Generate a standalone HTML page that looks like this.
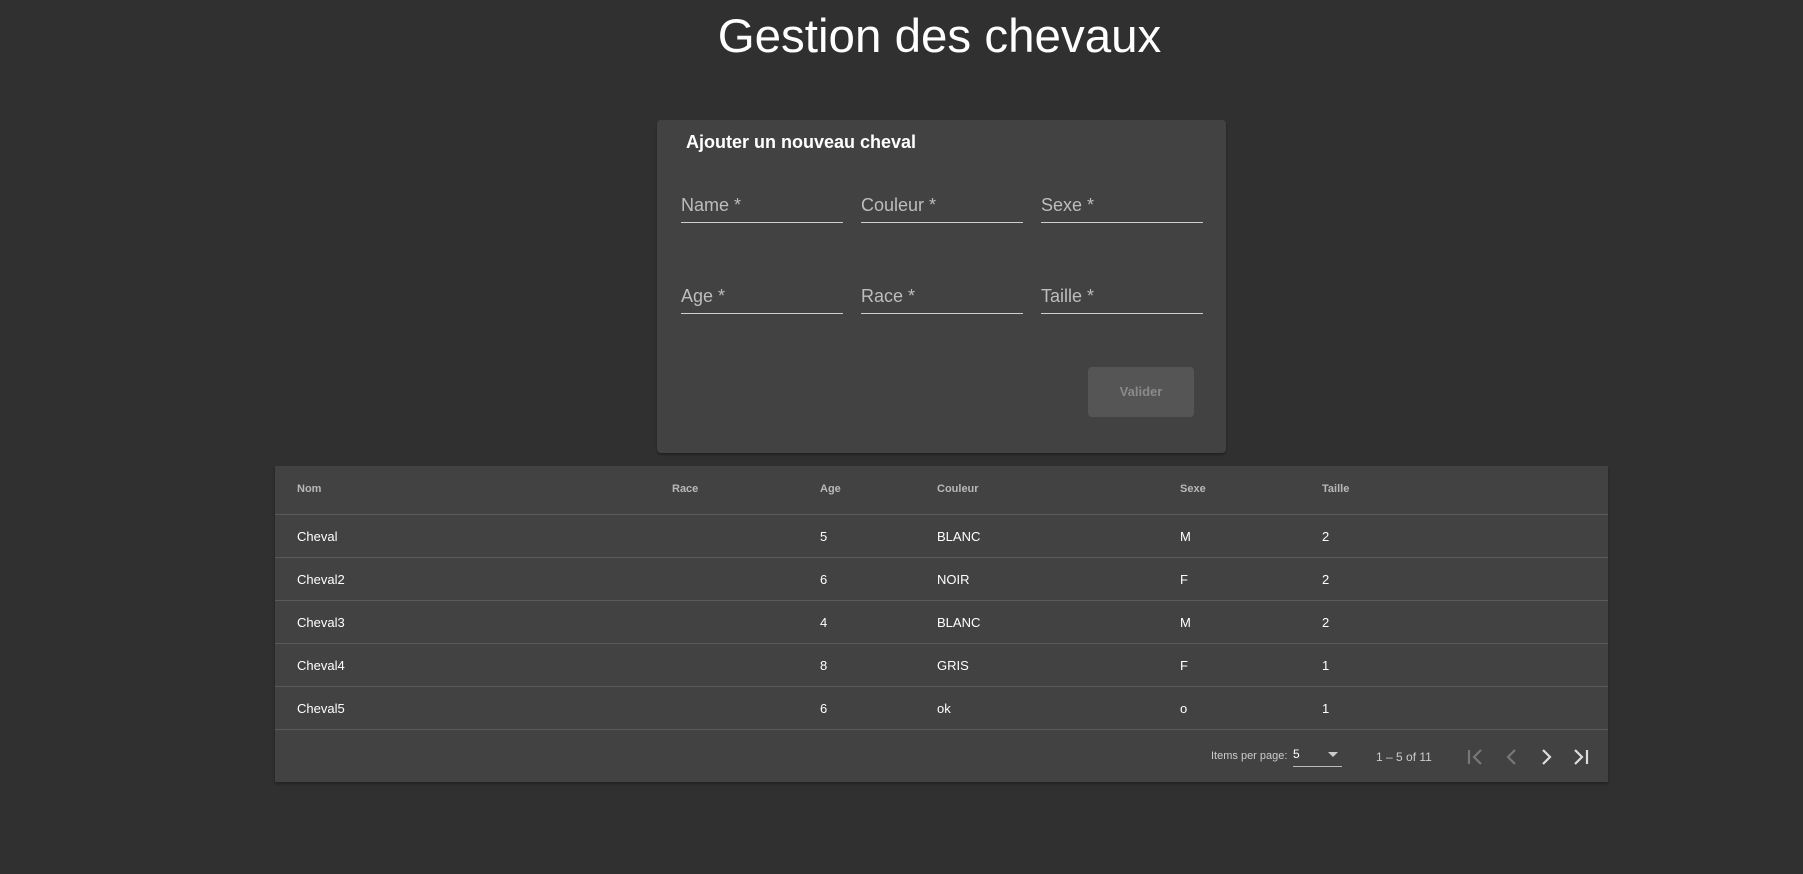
<!DOCTYPE html>
<html><head><meta charset="utf-8"><style>
*{margin:0;padding:0;box-sizing:border-box}
body{width:1803px;height:874px;background:#303030;font-family:"Liberation Sans",sans-serif;position:relative;overflow:hidden;color:#fff}
.a{position:absolute;white-space:nowrap}
h1{position:absolute;top:9px;text-align:center;font-weight:400;font-size:47.5px;color:#fff}
.card{position:absolute;left:657px;top:120px;width:569px;height:333px;background:#424242;border-radius:4px;box-shadow:0 2px 2px rgba(0,0,0,.3)}
.lbl{position:absolute;font-size:18px;color:#bdbdbd;border-bottom:1px solid #cfcfcf;width:162px;height:33px;padding-top:5px}
.btn{position:absolute;left:1088px;top:367px;width:106px;height:50px;background:#555;border-radius:4px;color:#8a8a8a;font-weight:bold;font-size:13px;text-align:center;line-height:50px}
.tbl{position:absolute;left:275px;top:466px;width:1333px;height:316px;background:#424242;box-shadow:0 2px 3px rgba(0,0,0,.3)}
.row{position:absolute;left:0;width:1333px;height:43px;border-bottom:1px solid #5a5a5a;font-size:13px;line-height:43px}
.row span{position:absolute}
.hd{font-size:11px;font-weight:bold;color:#b8b8b8}
</style></head><body>
<h1 style="width:1803px;left:38px">Gestion des chevaux</h1>
<div class="card"></div>
<div class="a" style="left:686px;top:132px;font-size:18px;font-weight:bold">Ajouter un nouveau cheval</div>
<div class="lbl" style="left:681px;top:190px">Name *</div>
<div class="lbl" style="left:861px;top:190px">Couleur *</div>
<div class="lbl" style="left:1041px;top:190px">Sexe *</div>
<div class="lbl" style="left:681px;top:281px">Age *</div>
<div class="lbl" style="left:861px;top:281px">Race *</div>
<div class="lbl" style="left:1041px;top:281px">Taille *</div>
<div class="btn">Valider</div>
<div class="tbl">
<div class="row hd" style="top:0;height:49px;line-height:46px"><span style="left:22px">Nom</span><span style="left:397px">Race</span><span style="left:545px">Age</span><span style="left:662px">Couleur</span><span style="left:905px">Sexe</span><span style="left:1047px">Taille</span></div>
<div class="row" style="top:49px"><span style="left:22px">Cheval</span><span style="left:545px">5</span><span style="left:662px">BLANC</span><span style="left:905px">M</span><span style="left:1047px">2</span></div>
<div class="row" style="top:92px"><span style="left:22px">Cheval2</span><span style="left:545px">6</span><span style="left:662px">NOIR</span><span style="left:905px">F</span><span style="left:1047px">2</span></div>
<div class="row" style="top:135px"><span style="left:22px">Cheval3</span><span style="left:545px">4</span><span style="left:662px">BLANC</span><span style="left:905px">M</span><span style="left:1047px">2</span></div>
<div class="row" style="top:178px"><span style="left:22px">Cheval4</span><span style="left:545px">8</span><span style="left:662px">GRIS</span><span style="left:905px">F</span><span style="left:1047px">1</span></div>
<div class="row" style="top:221px"><span style="left:22px">Cheval5</span><span style="left:545px">6</span><span style="left:662px">ok</span><span style="left:905px">o</span><span style="left:1047px">1</span></div>
</div>
<div class="a" style="left:1211px;top:750px;font-size:11px;color:#ccc">Items per page:</div>
<div class="a" style="left:1293px;top:747px;width:49px;height:20px;border-bottom:1px solid #bbb;font-size:12px">5</div>
<svg class="a" style="left:1328px;top:752px" width="10" height="6"><path d="M0 0L10 0L5 5Z" fill="#ccc"/></svg>
<div class="a" style="left:1376px;top:750px;font-size:12px;color:#ccc">1 – 5 of 11</div>
<svg class="a" style="left:1464px;top:745px" width="140" height="24" fill="none" stroke-width="2.2">
<path d="M5 5V19M17 5L10 12L17 19" stroke="#777"/>
<path d="M51 5L44 12L51 19" stroke="#777"/>
<path d="M79 5L86 12L79 19" stroke="#ddd"/>
<path d="M111 5L118 12L111 19M123 5V19" stroke="#ddd"/>
</svg>
</body></html>
